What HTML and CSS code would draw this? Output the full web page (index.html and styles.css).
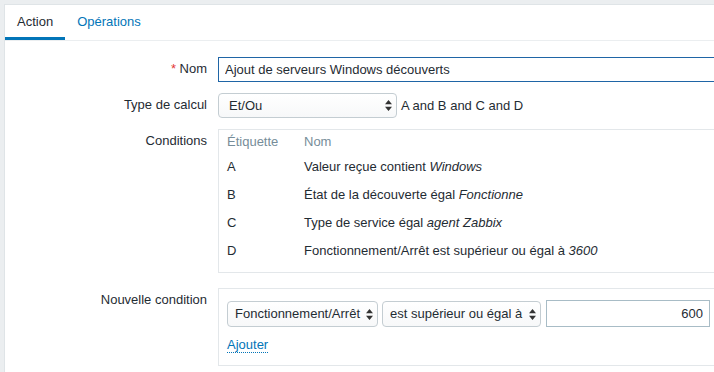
FILE: index.html
```html
<!DOCTYPE html>
<html lang="fr">
<head>
  <meta charset="UTF-8">
  <meta name="viewport" content="width=device-width, initial-scale=1.0">
  <title>Action</title>
  <link rel="stylesheet" href="styles.css">
</head>
<body>
  <div class="panel">
    <div class="tabs">
      <span class="tab active">Action</span>
      <span class="tab">Opérations</span>
    </div>

    <div class="form">
      <label class="label"><span class="req">*</span> Nom</label>
      <div class="field">
        <input class="input input-focus" type="text" value="Ajout de serveurs Windows découverts">
      </div>

      <label class="label">Type de calcul</label>
      <div class="field inline">
        <div class="select-wrap calc">
          <select class="select"><option>Et/Ou</option></select>
          <svg class="arrows" width="7" height="11" viewBox="0 0 7 11"><path d="M3.5 0 L7 4.2 L0 4.2 Z M3.5 11 L7 6.8 L0 6.8 Z" fill="#333"/></svg>
        </div>
        <span class="formula">A and B and C and D</span>
      </div>

      <label class="label">Conditions</label>
      <div class="field">
        <div class="box conditions">
          <table class="cond-table">
            <thead>
              <tr><th>Étiquette</th><th>Nom</th></tr>
            </thead>
            <tbody>
              <tr><td>A</td><td>Valeur reçue contient <em>Windows</em></td></tr>
              <tr><td>B</td><td>État de la découverte égal <em>Fonctionne</em></td></tr>
              <tr><td>C</td><td>Type de service égal <em>agent Zabbix</em></td></tr>
              <tr><td>D</td><td>Fonctionnement/Arrêt est supérieur ou égal à <em>3600</em></td></tr>
            </tbody>
          </table>
        </div>
      </div>

      <label class="label new-label">Nouvelle condition</label>
      <div class="field new-field">
        <div class="box new-cond">
          <div class="inline">
            <div class="select-wrap sel-type">
              <select class="select"><option>Fonctionnement/Arrêt</option></select>
              <svg class="arrows" width="7" height="11" viewBox="0 0 7 11"><path d="M3.5 0 L7 4.2 L0 4.2 Z M3.5 11 L7 6.8 L0 6.8 Z" fill="#333"/></svg>
            </div>
            <div class="select-wrap sel-op">
              <select class="select"><option>est supérieur ou égal à</option></select>
              <svg class="arrows" width="7" height="11" viewBox="0 0 7 11"><path d="M3.5 0 L7 4.2 L0 4.2 Z M3.5 11 L7 6.8 L0 6.8 Z" fill="#333"/></svg>
            </div>
            <input class="input input-num" type="text" value="600">
          </div>
          <a class="link" href="#">Ajouter</a>
        </div>
      </div>
    </div>
  </div>
</body>
</html>
```

FILE: styles.css
```css
body {
  font-family: "Liberation Sans", Arial, sans-serif;
  font-size: 13px;
  color: #1f2c33;
  margin: 0;
  padding: 4px 0 0 4px;
  background-color: #ebeef0;
  overflow: hidden;
}
.panel {
  width: 820px;
  height: 380px;
  background: #ffffff;
  border-left: 1px solid #dfe4e7;
  border-top: 1px solid #dfe4e7;
}
.tabs {
  display: flex;
  border-bottom: 1px solid #ebeef0;
}
.tab {
  padding: 8px 12px 7px;
  line-height: 17px;
  color: #0275b8;
  border-bottom: 3px solid transparent;
}
.tab.active {
  color: #1f2c33;
  border-bottom-color: #0275b8;
}
.form {
  display: grid;
  grid-template-columns: 202px 1fr;
  column-gap: 11px;
  row-gap: 11px;
  padding-top: 16px;
}
.label {
  text-align: right;
  padding-top: 4px;
  line-height: 16px;
}
.req {
  color: #e33734;
}
.new-label,
.new-field {
  margin-top: 4px;
}
.inline {
  display: flex;
  align-items: center;
}
.input {
  font-family: inherit;
  font-size: 13px;
  color: #1f2c33;
  box-sizing: border-box;
  height: 25px;
  margin: 0;
  border: 1px solid #acbbc2;
  background: #ffffff;
  outline: none;
}
.input-focus {
  width: 540px;
  padding: 0 6px;
  border-color: #1f65a6;
}
.select-wrap {
  position: relative;
}
.select {
  -webkit-appearance: none;
  appearance: none;
  font-family: inherit;
  font-size: 13px;
  color: #1f2c33;
  box-sizing: border-box;
  width: 100%;
  height: 25px;
  margin: 0;
  padding: 0 18px 0 10px;
  border: 1px solid #c4cdd2;
  border-radius: 4px;
  background: linear-gradient(#ffffff, #f7f8f9);
}
.arrows {
  position: absolute;
  right: 5px;
  top: 7px;
  pointer-events: none;
}
.calc {
  width: 179px;
}
.formula {
  margin-left: 4px;
}
.box {
  box-sizing: border-box;
  border: 1px solid #e3e7ea;
}
.conditions {
  width: 560px;
  padding: 2px 8px 8px;
}
.cond-table {
  border-collapse: collapse;
}
.cond-table th {
  font-weight: normal;
  color: #768d99;
  text-align: left;
  line-height: 20px;
  padding: 0;
}
.cond-table th:first-child,
.cond-table td:first-child {
  width: 77px;
}
.cond-table td {
  height: 28px;
  padding: 0;
}
.new-cond {
  width: 560px;
  padding: 11px 8px 12px;
}
.new-cond .select {
  height: 26px;
  padding: 0 12px 0 7px;
}
.new-cond .arrows {
  top: 8px;
}
.sel-type {
  width: 151px;
}
.sel-op {
  width: 159px;
  margin-left: 4px;
}
.input-num {
  width: 164px;
  height: 27px;
  margin-left: 5px;
  padding: 0 6px;
  text-align: right;
  border-color: #a8bcc6;
}
.link {
  display: inline-block;
  margin-top: 10px;
  color: #0275b8;
  text-decoration: none;
  line-height: 15px;
  border-bottom: 1px dotted #0275b8;
}
```
